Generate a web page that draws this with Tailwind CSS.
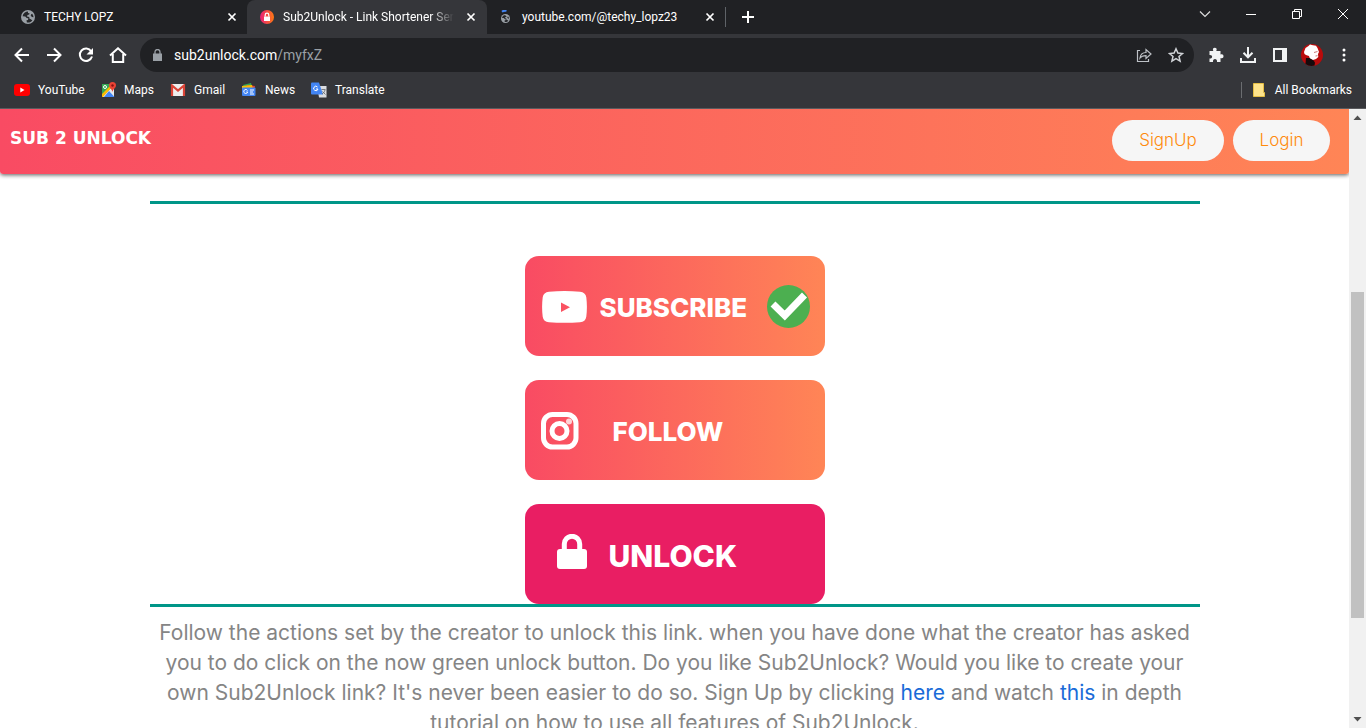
<!DOCTYPE html>
<html lang="en">
<head>
<meta charset="utf-8">
<title>Sub2Unlock - Link Shortener Service</title>
<script src="https://cdn.jsdelivr.net/npm/@tailwindcss/browser@4"></script>
</head>
<body class="flex h-screen flex-col overflow-hidden bg-white font-['Inter',sans-serif]">

<svg class="hidden" aria-hidden="true">
  <symbol id="x" viewBox="0 0 10 10"><path d="M1.500 1.500l7 7m0-7l-7 7" stroke="currentColor" stroke-width="1.700" fill="none"/></symbol>
  <symbol id="globe" viewBox="0 0 14 14"><circle cx="7" cy="7" r="7" fill="#9aa0a6"/><path d="M7 1.500C4.500 1.500 2 3.500 1.600 6.200l2.700.2 1.400 1.500 1.600.4-.3 1.600-1.500.4.4 2.100c2 .5 4.300-.3 5.500-1.900L9.800 9.200 8.500 8.800 8.200 6.900 6 6.400 6.500 5l1.700-.4.3-1.300L7 3zM10.200 4.200l-.5 1.600 1.300 1.300 1.500.1c0-1.300-.6-2.500-1.400-3.400z" fill="#25272a"/></symbol>
</svg>

<header class="flex shrink-0 flex-col border-b border-[#5a5b5e] bg-[#35363a] font-['Roboto',sans-serif] text-xs text-white">
  <div class="flex h-[34px] bg-[#202124]">
    <div class="flex w-[247px] items-center rounded-br-lg pr-[10px] pl-[21px]">
      <svg class="size-[14px]"><use href="#globe"/></svg>
      <span class="ml-[9px] flex-1">TECHY LOPZ</span>
      <button aria-label="Close tab"><svg class="size-[10px]"><use href="#x"/></svg></button>
    </div>
    <div class="flex w-[240px] items-center rounded-t-lg bg-[#35363a] pr-[11px] pl-[13px]">
      <svg class="size-[14px]" viewBox="0 0 14 14"><defs><linearGradient id="fav"><stop stop-color="#e91e78"/><stop offset="1" stop-color="#ff7a12"/></linearGradient></defs><circle cx="7" cy="7" r="7" fill="url(#fav)"/><path d="M4 6.500h6V11H4z" fill="#fff"/><path d="M5.200 6.500V5a1.800 1.800 0 013.600 0v1.500" fill="none" stroke="#fff" stroke-width="1.200"/></svg>
      <span class="ml-[9px] w-[171px] overflow-hidden whitespace-nowrap [mask-image:linear-gradient(90deg,#000_86%,transparent)]">Sub2Unlock - Link Shortener Service</span>
      <button class="ml-auto" aria-label="Close tab"><svg class="size-[10px]"><use href="#x"/></svg></button>
    </div>
    <div class="flex w-[238px] items-center rounded-bl-lg pr-[10px] pl-[13px]">
      <svg class="size-[14px]" viewBox="0 0 14 14"><svg x="1" y="4" width="9" height="9"><use href="#globe"/></svg><path d="M2 1.700Q4 .3 6.500.8" stroke="#4285f4" stroke-width="2" fill="none"/></svg>
      <span class="ml-[8px] flex-1">youtube.com/@techy_lopz23</span>
      <button aria-label="Close tab"><svg class="size-[10px]"><use href="#x"/></svg></button>
    </div>
    <div class="flex items-center"><span class="h-5 w-px bg-[#5f6368]"></span>
      <button class="ml-[15px]" aria-label="New tab"><svg class="size-[14px]" viewBox="0 0 14 14"><path d="M7 1v12M1 7h12" stroke="#fff" stroke-width="2"/></svg></button></div>
    <div class="ml-auto flex h-7 items-center">
      <button class="grid w-[46px] place-items-center" aria-label="Search tabs"><svg class="size-3" viewBox="0 0 12 12"><path d="M1 3.500l5 5 5-5" fill="none" stroke="#ddd" stroke-width="1.200"/></svg></button>
      <button class="grid w-[46px] place-items-center" aria-label="Minimize"><svg class="size-[10px]" viewBox="0 0 10 10"><path d="M0 5.500h10" stroke="#fff"/></svg></button>
      <button class="grid w-[46px] place-items-center" aria-label="Restore"><svg class="size-[10px]" viewBox="0 0 10 10"><path d="M.5 2.500h7v7h-7zM2.500 2V.5h7v7H8" fill="none" stroke="#fff"/></svg></button>
      <button class="grid w-[46px] place-items-center" aria-label="Close"><svg class="size-[10px]" viewBox="0 0 10 10"><path d="M0 0l10 10M10 0L0 10" stroke="#fff"/></svg></button>
    </div>
  </div>

  <div class="flex items-center pt-1 pr-[6px] pl-[6px]">
    <button class="grid w-8 place-items-center" aria-label="Back"><svg class="size-4" viewBox="0 0 16 16"><path d="M15 8H2M8 1.500L1.500 8 8 14.500" fill="none" stroke="#fff" stroke-width="2"/></svg></button>
    <button class="grid w-8 place-items-center" aria-label="Forward"><svg class="size-4" viewBox="0 0 16 16"><path d="M1 8h13M8 1.500L14.500 8 8 14.500" fill="none" stroke="#fff" stroke-width="2"/></svg></button>
    <button class="grid w-8 place-items-center" aria-label="Reload"><svg class="size-4" viewBox="0 0 16 16"><path d="M13.200 4.200A6.200 6.200 0 1014 9.500" fill="none" stroke="#fff" stroke-width="2"/><path d="M15 1v6.500H8.500z" fill="#fff"/></svg></button>
    <button class="grid w-8 place-items-center" aria-label="Home"><svg class="h-4 w-[18px]" viewBox="0 0 18 16"><path d="M1 8.500L9 1.300l8 7.200M3.800 7v8h10.400V7" fill="none" stroke="#fff" stroke-width="2"/></svg></button>
    <div class="ml-[6px] flex h-[34px] flex-1 items-center rounded-full bg-[#202124] pr-[2px] pl-[13px]">
      <svg class="h-[12px] w-[9px]" viewBox="0 0 9 12"><path d="M0 4.500h9V12H0z" fill="#9aa0a6"/><path d="M2 5V3a2.500 2.500 0 015 0v2" fill="none" stroke="#9aa0a6" stroke-width="1.300"/></svg>
      <a href="#" class="ml-[12px] flex-1 text-sm text-white">sub2unlock.com<span class="text-[#9aa0a6]">/myfxZ</span></a>
      <button class="grid w-8 place-items-center" aria-label="Share"><svg class="size-4" viewBox="0 0 16 16"><path d="M4 3.500H1.500v11h11V12M4 11c.5-4 3-5.500 6-5.500V2.500L15 7l-5 4.500V8.700C7.500 8.700 5.500 9 4 11z" fill="none" stroke="#bdc1c6" stroke-width="1.200"/></svg></button>
      <button class="grid w-8 place-items-center" aria-label="Bookmark this page"><svg class="size-4" viewBox="0 0 16 16"><path d="M8 1.800l1.900 4.300 4.600.4-3.500 3 1.100 4.600L8 11.700l-4.100 2.400L5 9.500l-3.500-3 4.600-.4z" fill="none" stroke="#d0d3d7" stroke-width="1.500"/></svg></button>
    </div>
    <div class="ml-[6px] flex">
      <button class="grid w-8 place-items-center" aria-label="Extensions"><svg class="size-4" viewBox="0 0 16 16"><path d="M1.500 4h3.800C4.300 2 5.300.8 6.800.8S9.300 2 8.300 4h4.200v3.500c2-.8 3 .3 3 1.700s-1 2.500-3 1.700V15H9c.3-2-.7-3-2-3s-2.300 1-2 3H1.500v-3.500c1.800.2 2.600-.7 2.600-1.800S3.300 7.800 1.500 8z" fill="#f1f3f4"/></svg></button>
      <button class="grid w-8 place-items-center" aria-label="Downloads"><svg class="size-4" viewBox="0 0 16 16"><path d="M8 0v10M3.500 5.800L8 10.300l4.500-4.500M1 11v4h14v-4" fill="none" stroke="#f1f3f4" stroke-width="2"/></svg></button>
      <button class="grid w-8 place-items-center" aria-label="Side panel"><svg class="size-[14px]" viewBox="0 0 14 14"><path fill-rule="evenodd" d="M0 0h14v14H0zM2 2v10h7V2z" fill="#f1f3f4"/></svg></button>
      <button class="grid w-8 place-items-center" aria-label="Profile"><svg class="size-[22px]" viewBox="0 0 22 22"><circle cx="11" cy="11" r="11" fill="#b90b0b"/><path d="M3 8l1.500-4 3-2L9 .5l3 .8 3 .5 1.500 2.200L18 8l-1 2 .3 3-2.300 2-3 1-3-1-1-3-3-1-1.500-1z" fill="#fff"/><path d="M13 8.500l3.500-1M14.500 12l2-.3" stroke="#b55" stroke-width=".8"/><path d="M5 14l3.500 0 4 2.500 1.500 2-.5 3A11 11 0 014.500 20z" fill="#160a0c"/></svg></button>
      <button class="grid w-8 place-items-center" aria-label="Menu"><svg class="h-[14px] w-1" viewBox="0 0 4 14"><g fill="#fff"><circle cx="2" cy="2" r="1.500"/><circle cx="2" cy="7" r="1.500"/><circle cx="2" cy="12" r="1.500"/></g></svg></button>
    </div>
  </div>

  <nav class="flex h-9 items-center pr-[14px] pl-[14px]" aria-label="Bookmarks">
    <a href="#" class="flex w-[87px] items-center gap-2"><svg class="h-3 w-4" viewBox="0 0 16 12"><rect width="16" height="12" rx="3" fill="#f00"/><path d="M6.300 3.500v5l4.200-2.500z" fill="#fff"/></svg>YouTube</a>
    <a href="#" class="flex w-[69px] items-center gap-[7px]"><svg class="size-4" viewBox="0 0 16 16"><path d="M1 2h12v13H1z" fill="#34a853"/><path d="M1 15L13 3v12z" fill="#e8eaed"/><path d="M1 12L10 3l2 1L2 15H1z" fill="#fbbc04"/><path d="M8 9l5.500 6H3z" fill="#4285f4"/><circle cx="4" cy="5" r="1.500" fill="none" stroke="#fff"/><path d="M11.500 0A3.500 3.500 0 008 3.500C8 6 11 7 11.500 10 12 7 15 6 15 3.500A3.500 3.500 0 0011.500 0z" fill="#ea4335"/><circle cx="11.500" cy="3.500" r="1.200" fill="#811"/></svg>Maps</a>
    <a href="#" class="flex w-[71px] items-center gap-2"><svg class="h-3 w-4" viewBox="0 0 16 12"><rect x="1" width="14" height="12" rx="1" fill="#eee"/><path d="M2 12V1.500l6 5 6-5V12" fill="none" stroke="#db4437" stroke-width="2.200"/></svg>Gmail</a>
    <a href="#" class="flex w-[70px] items-center gap-2"><svg class="size-4" viewBox="0 0 16 16"><path d="M2 3l8-2 1 4H3z" fill="#34a853"/><path d="M6 3l8 1-1 4H5z" fill="#ea4335"/><path d="M1 4l10-1 1 4H1z" fill="#fbbc04"/><rect x="1" y="5.500" width="13.500" height="8.500" rx="1" fill="#4285f4"/><path d="M6.500 8.500A2 2 0 106.700 10H5.300M9 8h4M9 10h3M9 12h4" stroke="#fff" fill="none"/></svg>News</a>
    <a href="#" class="flex items-center gap-2"><svg class="size-4" viewBox="0 0 16 16"><path d="M6 4h9.500v11.500H8z" fill="#dadce0"/><path d="M0 1.500Q0 .5 1 .5h7l4 12H1q-1 0-1-1z" fill="#4285f4"/><path d="M6.500 5A2.200 2.200 0 107 7H5" stroke="#fff" fill="none"/><path d="M10.500 7.500h4M14 8c-.5 2-1.500 3-3 4M11.500 9.500l3 3" stroke="#5f6368" fill="none" stroke-width=".8"/></svg>Translate</a>
    <a href="#" class="ml-auto flex items-center"><span class="mr-[11px] h-4 w-px bg-[#6b6d70]"></span><svg class="mr-[10px] h-[14px] w-3" viewBox="0 0 12 14"><path d="M.5.500h10v9h1v4H.5z" fill="#fde38b" stroke="#e5bf45"/></svg>All Bookmarks</a>
  </nav>
</header>

<div class="flex min-h-0 flex-1">
  <main class="min-w-0 flex-1 overflow-hidden">
    <div class="flex h-[65px] items-start justify-between rounded-b-[3px] bg-linear-to-r/srgb from-[#f94b63] to-[#ff8556] pt-[11px] pr-[19px] pl-[10px] shadow-[0_1px_4px_rgba(0,0,0,0.65)]">
      <a href="#" class="mt-[6px] font-['DejaVu_Sans',sans-serif] text-[17px] leading-6 font-bold text-white">SUB 2 UNLOCK</a>
      <div class="flex gap-[9px] text-[17px] font-light text-[#ff8a0c]">
        <button class="h-[41px] w-[112px] rounded-full bg-[#f6f6f6]">SignUp</button>
        <button class="h-[41px] w-[97px] rounded-full bg-[#f6f6f6]">Login</button>
      </div>
    </div>
    <div class="mx-auto mt-[27px] max-w-[1050px]">
      <hr class="border-t-3 border-[#009688]">
      <div class="mt-[52px] flex flex-col items-center gap-6 font-extrabold text-white">
        <button class="flex h-[100px] w-[300px] items-center rounded-[14px] bg-linear-to-r/srgb from-[#f94b63] to-[#ff8556] pl-[17px] text-[26px]">
          <svg class="mt-[2px] h-8 w-[45px]" viewBox="0 0 45 32"><path fill-rule="evenodd" d="M7 .8Q22.500-.8 38 .8q5.500.5 6.300 5.500 1.200 9.700 0 19.400-.8 5-6.300 5.500-15.500 1.300-31 0-5.500-.5-6.300-5.500-1.200-9.700 0-19.400Q1.500 1.300 7 .8zM19 11.500v9.500l9-4.700z" fill="#fff"/></svg>
          <span class="ml-[13px] w-[154px] pt-[2px] text-left">SUBSCRIBE</span>
          <svg class="ml-[13px] size-[43px]" viewBox="0 0 43 43"><circle cx="21.500" cy="21.500" r="21.500" fill="#4caf50"/><path d="M6 19l11.800 11.500L37.500 10" fill="none" stroke="#fff" stroke-width="7"/></svg>
        </button>
        <button class="flex h-[100px] w-[300px] items-center rounded-[14px] bg-linear-to-r/srgb from-[#f94b63] to-[#ff8556] pl-[16px] text-[26px]">
          <svg class="mt-[2px] size-[38px]" viewBox="0 0 38 38"><rect x="2.500" y="2.500" width="32.500" height="32.500" rx="9" fill="none" stroke="#fff" stroke-width="5"/><circle cx="18.500" cy="19" r="7.500" fill="none" stroke="#fff" stroke-width="5"/><circle cx="28" cy="9.500" r="3" fill="#fff" fill-opacity=".75"/></svg>
          <span class="ml-[34px] pt-[2px]">FOLLOW</span>
        </button>
        <button class="flex h-[100px] w-[300px] items-center rounded-[14px] bg-[#e91e63] pl-[32px] text-[30px]">
          <svg class="mb-[6px] h-[35px] w-[30px]" viewBox="0 0 30 35"><rect y="15" width="30" height="20" rx="3" fill="#fff"/><path d="M7.300 16v-6a7.700 7.700 0 0115.400 0v6" fill="none" stroke="#fff" stroke-width="5"/></svg>
          <span class="ml-[22px] pt-1">UNLOCK</span>
        </button>
      </div>
      <hr class="border-t-3 border-[#009688]">
      <p class="mt-[11px] text-center text-[21px] leading-[30px] whitespace-nowrap text-[#858585]">Follow the actions set by the creator to unlock this link. when you have done what the creator has asked<br>you to do click on the now green unlock button. Do you like Sub2Unlock? Would you like to create your<br>own Sub2Unlock link? It's never been easier to do so. Sign Up by clicking <a href="#" class="text-[#1a6bd8]">here</a> and watch <a href="#" class="text-[#1a6bd8]">this</a> in depth<br>tutorial on how to use all features of Sub2Unlock.</p>
    </div>
  </main>
  <div class="flex w-[17px] shrink-0 flex-col items-center bg-[#f1f1f1]" aria-hidden="true">
    <svg class="h-[17px] w-[17px] shrink-0" viewBox="0 0 17 17"><path d="M4.500 11l4-4.500 4 4.500z" fill="#505050"/></svg>
    <div class="grow-[166]"></div>
    <div class="w-[13px] grow-[326] bg-[#c1c1c1]"></div>
    <div class="grow-[93]"></div>
    <svg class="h-[17px] w-[17px] shrink-0" viewBox="0 0 17 17"><path d="M4.500 6l4 4.500 4-4.500z" fill="#505050"/></svg>
  </div>
</div>
</body>
</html>
